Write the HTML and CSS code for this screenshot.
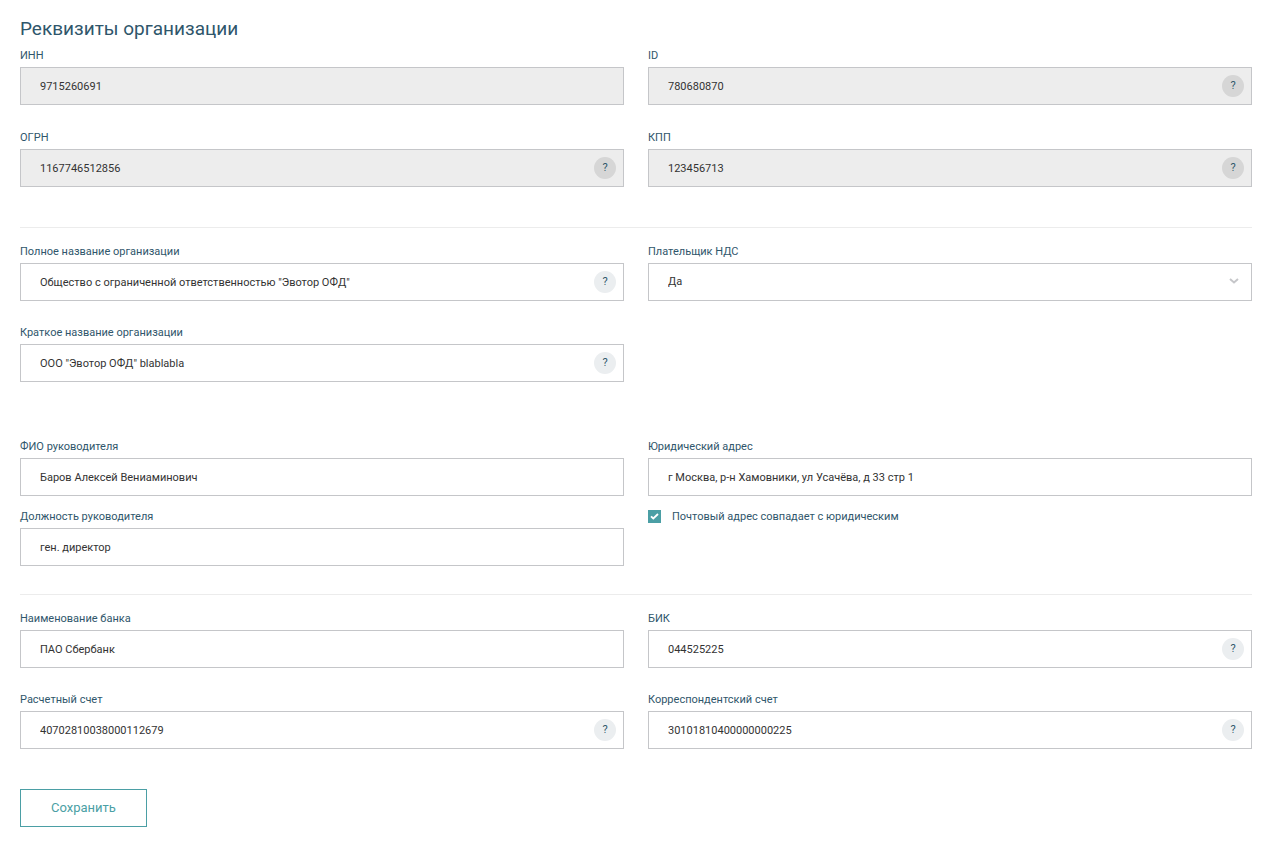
FILE: index.html
```html
<!DOCTYPE html>
<html lang="ru">
<head>
<meta charset="utf-8">
<meta name="viewport" content="width=device-width, initial-scale=1">
<title>Реквизиты организации</title>
<link rel="stylesheet" href="styles.css">
</head>
<body>
<main class="page">
  <h1 class="title">Реквизиты организации</h1>
  <form class="form">
    <section class="group group-ids">
      <div class="field">
        <label class="label" for="inn">ИНН</label>
        <div class="control"><input class="input" id="inn" type="text" value="9715260691" readonly></div>
      </div>
      <div class="field">
        <label class="label" for="org-id">ID</label>
        <div class="control"><input class="input" id="org-id" type="text" value="780680870" readonly><button class="help" type="button">?</button></div>
      </div>
      <div class="field">
        <label class="label" for="ogrn">ОГРН</label>
        <div class="control"><input class="input" id="ogrn" type="text" value="1167746512856" readonly><button class="help" type="button">?</button></div>
      </div>
      <div class="field">
        <label class="label" for="kpp">КПП</label>
        <div class="control"><input class="input" id="kpp" type="text" value="123456713" readonly><button class="help" type="button">?</button></div>
      </div>
    </section>

    <section class="group group-names">
      <div class="field">
        <label class="label" for="full-name">Полное название организации</label>
        <div class="control"><input class="input" id="full-name" type="text" value='Общество с ограниченной ответственностью "Эвотор ОФД"'><button class="help" type="button">?</button></div>
      </div>
      <div class="field">
        <label class="label" for="vat">Плательщик НДС</label>
        <div class="control">
          <select class="input select" id="vat"><option selected>Да</option><option>Нет</option></select>
          <svg class="chevron" viewBox="0 0 10 6" aria-hidden="true"><path d="M1 1l4 3.5L9 1"/></svg>
        </div>
      </div>
      <div class="field">
        <label class="label" for="short-name">Краткое название организации</label>
        <div class="control"><input class="input" id="short-name" type="text" value='ООО "Эвотор ОФД" blablabla'><button class="help" type="button">?</button></div>
      </div>
    </section>

    <section class="group group-head">
      <div class="field">
        <label class="label" for="head-name">ФИО руководителя</label>
        <div class="control"><input class="input" id="head-name" type="text" value="Баров Алексей Вениаминович"></div>
      </div>
      <div class="field">
        <label class="label" for="address">Юридический адрес</label>
        <div class="control"><input class="input" id="address" type="text" value="г Москва, р-н Хамовники, ул Усачёва, д 33 стр 1"></div>
      </div>
      <div class="field">
        <label class="label" for="position">Должность руководителя</label>
        <div class="control"><input class="input" id="position" type="text" value="ген. директор"></div>
      </div>
      <label class="check" for="same-address">
        <span class="check-box">
          <input class="check-input" id="same-address" type="checkbox" checked>
          <svg class="check-mark" viewBox="0 0 13 13" aria-hidden="true"><path d="M3 6.3l2.3 2.2L10 4"/></svg>
        </span>
        Почтовый адрес совпадает с юридическим
      </label>
    </section>

    <section class="group group-bank">
      <div class="field">
        <label class="label" for="bank">Наименование банка</label>
        <div class="control"><input class="input" id="bank" type="text" value="ПАО Сбербанк"></div>
      </div>
      <div class="field">
        <label class="label" for="bik">БИК</label>
        <div class="control"><input class="input" id="bik" type="text" value="044525225"><button class="help" type="button">?</button></div>
      </div>
      <div class="field">
        <label class="label" for="account">Расчетный счет</label>
        <div class="control"><input class="input" id="account" type="text" value="40702810038000112679"><button class="help" type="button">?</button></div>
      </div>
      <div class="field">
        <label class="label" for="corr-account">Корреспондентский счет</label>
        <div class="control"><input class="input" id="corr-account" type="text" value="30101810400000000225"><button class="help" type="button">?</button></div>
      </div>
    </section>

    <button class="save" type="submit">Сохранить</button>
  </form>
</main>
</body>
</html>
```

FILE: styles.css
```css
* {
  box-sizing: border-box;
}

body {
  margin: 0;
  background: #fff;
  color: #2f566b;
  font: 11px/16px Roboto, "Noto Sans", sans-serif;
}

.page {
  padding: 17px 12px 24px 20px;
}

.title {
  margin: 0 0 7px;
  font-size: 19px;
  line-height: 24px;
  font-weight: 400;
}

.group {
  display: grid;
  grid-template-columns: repeat(2, minmax(0, 1fr));
  gap: 24px;
}

.group-ids {
  row-gap: 25px;
}

.group-names {
  margin-top: 40px;
  padding-top: 16px;
  border-top: 1px solid #ececec;
}

.group-head {
  margin-top: 57px;
  row-gap: 13px;
}

.group-bank {
  margin-top: 28px;
  padding-top: 16px;
  border-top: 1px solid #ececec;
}

.label {
  display: block;
  margin-bottom: 3px;
}

.control {
  position: relative;
}

.input {
  display: block;
  width: 100%;
  height: 38px;
  margin: 0;
  padding: 0 40px 0 19px;
  border: 1px solid #c5c6c9;
  border-radius: 0;
  background: #fff;
  color: #333;
  font: inherit;
  outline: none;
}

.input:read-only:not(.select) {
  background: #ededed;
}

.select {
  appearance: none;
}

.chevron {
  position: absolute;
  top: 15px;
  right: 13px;
  width: 10px;
  height: 6px;
  fill: none;
  stroke: #c5c6c9;
  stroke-width: 2;
  pointer-events: none;
}

.help {
  position: absolute;
  top: 8px;
  right: 8px;
  width: 22px;
  height: 22px;
  padding: 0;
  border: 0;
  border-radius: 50%;
  background: #ebeef0;
  color: #2f566b;
  font: inherit;
}

.input:read-only + .help {
  background: #d6d6d6;
}

.check {
  display: flex;
  align-items: center;
  align-self: start;
  gap: 11px;
}

.check-box {
  position: relative;
  height: 14px;
}

.check-input {
  display: block;
  width: 13px;
  height: 13px;
  margin: 0;
  appearance: none;
  background: #fff;
  border: 1px solid #4b9fa5;
}

.check-input:checked {
  background: #4b9fa5;
}

.check-mark {
  position: absolute;
  top: 0;
  left: 0;
  width: 13px;
  height: 13px;
  fill: none;
  stroke: #fff;
  stroke-width: 1.8;
  pointer-events: none;
}

.save {
  display: block;
  height: 38px;
  margin-top: 40px;
  padding: 0 30px 1px;
  border: 1px solid #4b9fa5;
  background: #fff;
  color: #4b9fa5;
  font-family: inherit;
  font-size: 13px;
}
```
